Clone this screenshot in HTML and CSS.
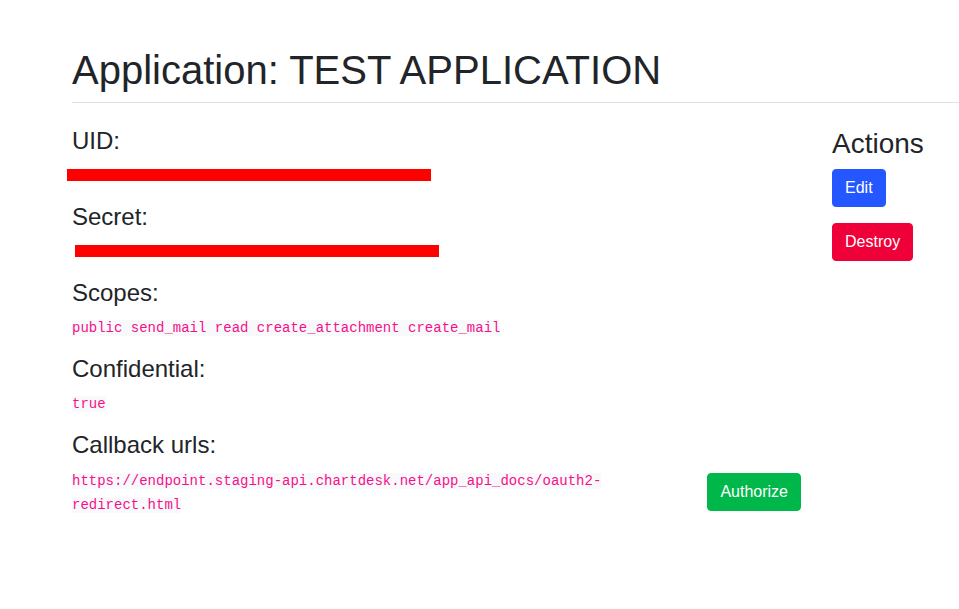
FILE: index.html
```html
<!DOCTYPE html>
<html lang="en">
<head>
<meta charset="utf-8">
<title>Application: TEST APPLICATION</title>
<link rel="stylesheet" href="styles.css">
</head>
<body>
<div class="page">
  <div class="page-header">
    <h1 class="title">Application: TEST APPLICATION</h1>
  </div>
  <div class="row">
    <div class="main">
      <h4 class="label">UID:</h4>
      <div class="value redacted-row"><span class="bar bar-uid"></span></div>

      <h4 class="label">Secret:</h4>
      <div class="value redacted-row"><span class="bar bar-secret"></span></div>

      <h4 class="label">Scopes:</h4>
      <p class="value code-row"><code class="code">public send_mail read create_attachment create_mail</code></p>

      <h4 class="label">Confidential:</h4>
      <p class="value code-row"><code class="code">true</code></p>

      <h4 class="label">Callback urls:</h4>
      <div class="callback">
        <div class="callback-url"><code class="code">https://endpoint.staging-api.chartdesk.net/app_api_docs/oauth2-redirect.html</code></div>
        <a class="btn btn-success" href="#">Authorize</a>
      </div>
    </div>
    <div class="side">
      <h3 class="side-title">Actions</h3>
      <p class="action"><a class="btn btn-primary" href="#">Edit</a></p>
      <p class="action"><button class="btn btn-danger" type="button">Destroy</button></p>
    </div>
  </div>
</div>
</body>
</html>
```

FILE: styles.css
```css
html, body {
  margin: 0;
  padding: 0;
  background: #ffffff;
}

body {
  font-family: "Liberation Sans", Arial, sans-serif;
  font-size: 16px;
  line-height: 1.5;
  color: #212529;
  overflow: hidden;
}

.page {
  padding: 46px 0 0 72px;
}

.page-header {
  border-bottom: 1px solid #dee2e6;
  margin-bottom: 24px;
}

.title {
  margin: 0 0 8px 0;
  font-size: 40px;
  font-weight: 400;
  line-height: 48px;
}

.row {
  display: flex;
  align-items: flex-start;
}

.main {
  width: 729px;
  flex: none;
}

.side {
  margin-left: 31px;
  flex: none;
}

.label {
  margin: 0 0 8px 0;
  font-size: 24px;
  font-weight: 400;
  line-height: 28px;
}

.value {
  margin: 0 0 16px 0;
  line-height: 24px;
  font-size: 14px;
}

.code-row {
  padding-top: 1px;
  margin-bottom: 15px;
}

.code {
  font-family: "Liberation Mono", "Courier New", monospace;
  font-size: 14px;
  line-height: 24px;
  vertical-align: top;
  color: #f7108a;
  background: #f8f9fa;
  word-break: break-word;
}

.redacted-row {
  height: 24px;
  padding-top: 6px;
  box-sizing: border-box;
}

.bar {
  display: block;
  height: 12px;
  background: #ff0000;
}

.bar-uid {
  width: 364px;
  margin-left: -5px;
}

.bar-secret {
  width: 364px;
  margin-left: 3px;
}

.callback {
  display: flex;
  align-items: flex-start;
  margin-bottom: 16px;
}

.callback-url {
  width: 635px;
  flex: none;
  font-size: 14px;
  line-height: 24px;
  padding-top: 2px;
}

.callback .btn {
  margin-left: auto;
  margin-top: 6px;
}

.side-title {
  margin: 0 0 8px 0;
  font-size: 28px;
  font-weight: 400;
  line-height: 1.2;
}

.action {
  margin: 0 0 16px 0;
}

.btn {
  display: inline-block;
  font-family: "Liberation Sans", Arial, sans-serif;
  font-size: 16px;
  line-height: 24px;
  font-weight: 400;
  padding: 6px 12px;
  border: 1px solid transparent;
  border-radius: 4px;
  color: #ffffff;
  text-decoration: none;
  cursor: pointer;
}

.btn-primary {
  background: #2457ff;
  border-color: #2457ff;
}

.btn-danger {
  background: #ef0039;
  border-color: #ef0039;
}

.btn-success {
  background: #00b74a;
  border-color: #00b74a;
}
```
